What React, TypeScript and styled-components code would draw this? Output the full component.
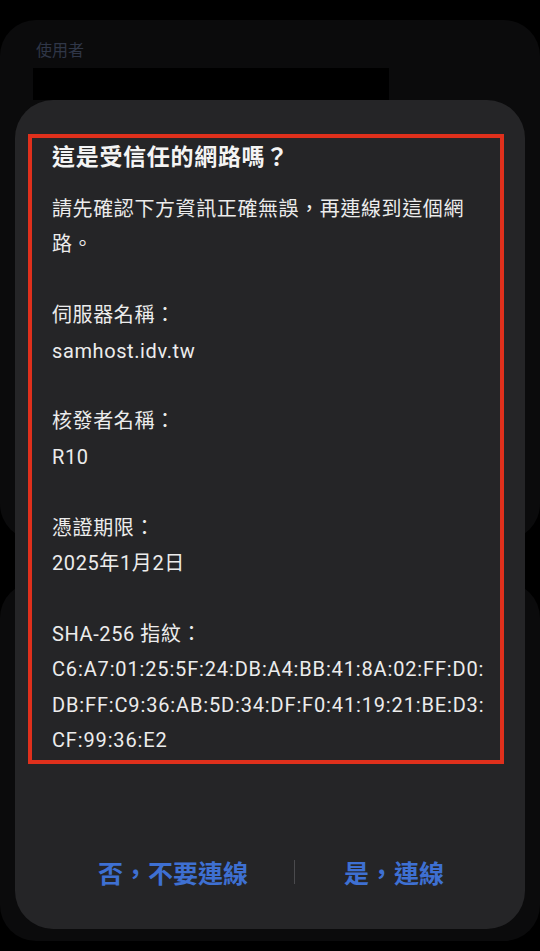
import React from "react";
import styled, { createGlobalStyle } from "styled-components";

const Global = createGlobalStyle`
  html, body { margin: 0; padding: 0; background: #000; }
  body { font-family: Roboto, "Noto Sans CJK TC", sans-serif; }
  #root { min-height: 951px; }
`;

const Screen = styled.div`
  position: relative;
  width: 540px;
  height: 951px;
  background: #000;
  overflow: hidden;
  display: flex;
  flex-direction: column;
  gap: 42px;
  padding-top: 20px;
  box-sizing: border-box;
`;

const BgCard = styled.div<{ $h: number }>`
  height: ${(p) => p.$h}px;
  background: #0b0b0c;
  border-radius: 36px;
  padding: 20px 36px 0 33px;
  box-sizing: border-box;
  display: flex;
  flex-direction: column;
`;

const FieldLabel = styled.div`
  font-family: "Noto Sans CJK TC", sans-serif;
  font-size: 16px;
  line-height: 18px;
  color: #2f3647;
  padding-left: 3px;
`;

const BlackBar = styled.div`
  margin-top: 10px;
  width: 356px;
  height: 32px;
  background: #000;
`;

const Dialog = styled.div`
  position: absolute;
  top: 100px;
  left: 15px;
  width: 510px;
  height: 829px;
  background: #252527;
  border-radius: 38px;
  padding: 34px 21px 0 13px;
  box-sizing: border-box;
  display: flex;
  flex-direction: column;
`;

const Highlight = styled.div`
  border: 4px solid #e0301c;
  height: 630px;
  box-sizing: border-box;
  padding: 5px 0 0 20px;
  display: flex;
  flex-direction: column;
`;

const Title = styled.h1`
  margin: 0;
  font-family: Roboto, "Noto Sans CJK TC", sans-serif;
  font-size: 23px;
  line-height: 30px;
  font-weight: 700;
  letter-spacing: 0.7px;
  color: #f4f4f4;
`;

const Body = styled.div`
  margin-top: 19px;
  font-family: Roboto, "Noto Sans CJK TC", sans-serif;
  font-size: 20px;
  line-height: 35.4px;
  letter-spacing: 0.6px;
  color: #ececec;
`;

const Para = styled.div<{ $last?: boolean }>`
  margin-bottom: ${(p) => (p.$last ? 0 : 35.4)}px;
  white-space: nowrap;
`;

const Line = styled.div<{ $hex?: boolean }>`
  letter-spacing: ${(p) => (p.$hex ? "0.85px" : "inherit")};
`;

const Actions = styled.div`
  margin-top: 93px;
  display: grid;
  grid-template-columns: 242px 1px 198px;
  align-items: center;
  padding-left: 24px;
`;

const ActionButton = styled.button`
  background: none;
  border: none;
  padding: 0;
  font-family: "Noto Sans CJK TC", sans-serif;
  font-size: 25px;
  line-height: 30px;
  font-weight: 700;
  color: #3e70d2;
  text-align: center;
  cursor: pointer;
`;

const Divider = styled.div`
  width: 1px;
  height: 24px;
  background: #4a4a4d;
`;

const fields: { label: string; lines: string[]; hex?: boolean }[] = [
  { label: "伺服器名稱：", lines: ["samhost.idv.tw"] },
  { label: "核發者名稱：", lines: ["R10"] },
  { label: "憑證期限：", lines: ["2025年1月2日"] },
  {
    label: "SHA-256 指紋：",
    hex: true,
    lines: [
      "C6:A7:01:25:5F:24:DB:A4:BB:41:8A:02:FF:D0:",
      "DB:FF:C9:36:AB:5D:34:DF:F0:41:19:21:BE:D3:",
      "CF:99:36:E2",
    ],
  },
];

export default function App() {
  return (
    <>
      <Global />
      <Screen>
        <BgCard $h={520}>
          <FieldLabel>使用者</FieldLabel>
          <BlackBar />
        </BgCard>
        <BgCard $h={359} />
        <Dialog>
          <Highlight>
            <Title>這是受信任的網路嗎？</Title>
            <Body>
              <Para>
                <Line>請先確認下方資訊正確無誤，再連線到這個網</Line>
                <Line>路。</Line>
              </Para>
              {fields.map((f, i) => (
                <Para key={f.label} $last={i === fields.length - 1}>
                  <Line>{f.label}</Line>
                  {f.lines.map((l) => (
                    <Line key={l} $hex={f.hex}>
                      {l}
                    </Line>
                  ))}
                </Para>
              ))}
            </Body>
          </Highlight>
          <Actions>
            <ActionButton>否，不要連線</ActionButton>
            <Divider />
            <ActionButton>是，連線</ActionButton>
          </Actions>
        </Dialog>
      </Screen>
    </>
  );
}
